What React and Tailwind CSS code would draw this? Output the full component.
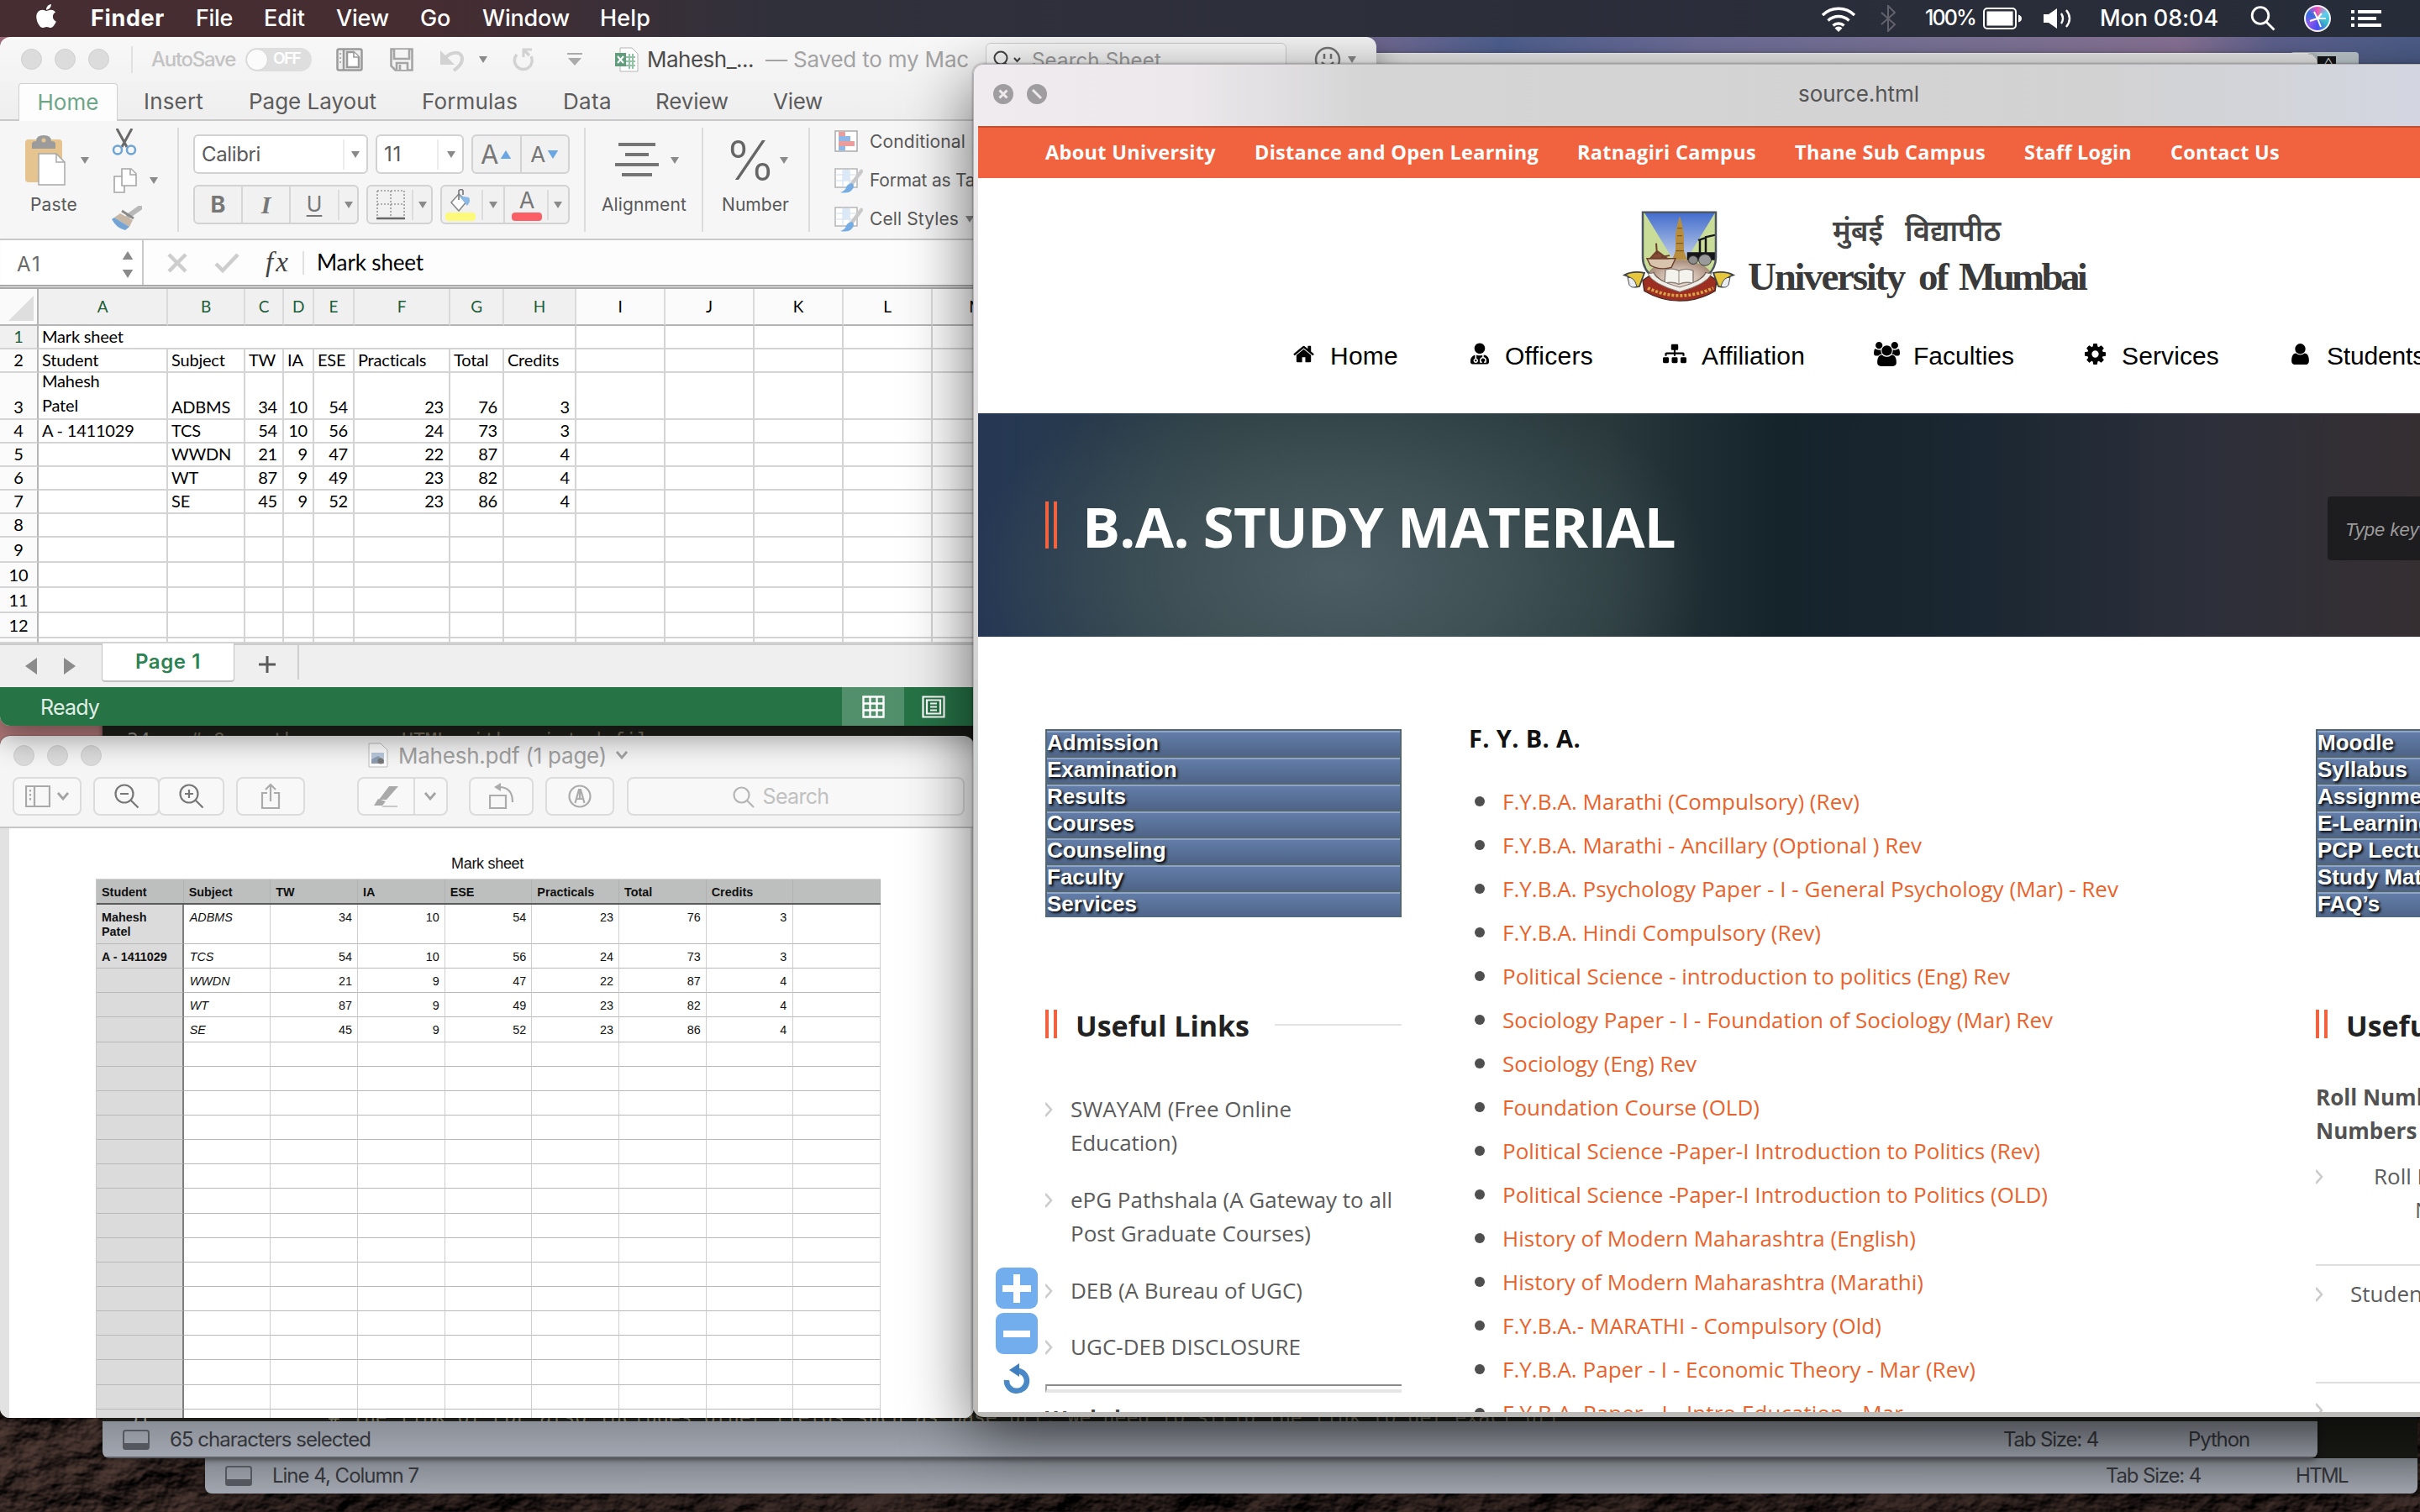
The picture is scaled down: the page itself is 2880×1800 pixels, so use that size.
import React, { useLayoutEffect, useRef, useState } from "react";
import { FaApple, FaUserMd, FaSitemap } from "react-icons/fa";

/* Text run whose tracking is computed so that it fills a given width. */
function T({ w, className = "", children }) {
  const ref = useRef(null);
  const [ls, setLs] = useState(0);
  useLayoutEffect(() => {
    const el = ref.current;
    const prev = el.style.letterSpacing;
    el.style.letterSpacing = "0px";
    const natural = el.getBoundingClientRect().width;
    el.style.letterSpacing = prev;
    setLs((w - natural) / el.textContent.length);
  }, [w]);
  return (
    <span ref={ref} className={"inline-block shrink-0 whitespace-pre " + className} style={{ letterSpacing: ls + "px" }}>
      {children}
    </span>
  );
}

const Caret = ({ className = "", up }) => (
  <svg viewBox="0 0 10 8" className={"h-2 w-2.5 shrink-0 " + className} fill="#8a8a8a">
    <path d={up ? "M0 8h10L5 0z" : "M0 0h10L5 8z"} />
  </svg>
);

/* ------------------------------- Menu bar ------------------------------- */
function MenuBar() {
  return (
    <header className="absolute inset-x-0 top-0 z-50 flex h-11 items-center bg-gradient-to-r from-[#452d32] from-[18%] via-[#30303b] via-[32%] to-[#262c38] text-[27px] font-medium text-white">
      <FaApple className="-mt-1.5 ml-[41px] size-[32px] w-[28px]" />
      <T w={88} className="ml-[39px] font-bold">Finder</T>
      <T w={44} className="ml-[37px]">File</T>
      <T w={49} className="ml-[37px]">Edit</T>
      <T w={63} className="ml-[37px]">View</T>
      <T w={36} className="ml-[37px]">Go</T>
      <T w={104} className="ml-[38px]">Window</T>
      <T w={60} className="ml-[36px]">Help</T>
      <div className="ml-auto flex items-center pr-[46px]">
        <svg viewBox="0 0 42 32" className="h-8 w-[42px]" fill="none" stroke="#fff" strokeWidth="3.4">
          <path d="M2 12a27 27 0 0 1 38 0M8.500 18.500a18 18 0 0 1 25 0M14.500 24.500a9.500 9.500 0 0 1 13 0" />
          <path d="M16.500 27.500l4.500 4.500 4.500-4.500a6 6 0 0 0-9 0z" fill="#fff" stroke="none" />
        </svg>
        <svg viewBox="0 0 20 32" className="ml-[28px] h-8 w-5" fill="none" stroke="#62626d" strokeWidth="2">
          <path d="M2 9l16 14-8 8V1l8 8L2 23" />
        </svg>
        <T w={60} className="ml-[34px] text-[25px]">100%</T>
        <svg viewBox="0 0 46 26" className="ml-[9px] h-[26px] w-[46px]" fill="none" stroke="#fff" strokeWidth="2">
          <rect x="1" y="1" width="38" height="24" rx="4" />
          <rect x="4.500" y="4.500" width="31" height="17" fill="#fff" stroke="none" />
          <path d="M42 8.500q4 1 4 4.500t-4 4.500z" fill="#fff" stroke="none" />
        </svg>
        <svg viewBox="0 0 34 26" className="ml-[26px] h-[26px] w-[34px]" fill="none" stroke="#fff" strokeWidth="2.400">
          <path d="M0 8h6l10-7v24l-10-7H0z" fill="#fff" stroke="none" />
          <path d="M21 7q4 6 0 12M27 3q8 10 0 20" />
        </svg>
        <T w={141} className="ml-[33px]">Mon 08:04</T>
        <svg viewBox="0 0 30 30" className="ml-[38px] size-[30px]" fill="none" stroke="#fff" strokeWidth="2.800">
          <circle cx="12" cy="11.500" r="9.800" />
          <path d="M19 19l9.500 9.500" />
        </svg>
        <span className="ml-[34px] flex size-8 items-center justify-center rounded-full border-2 border-white/90 bg-[conic-gradient(#ff4fa0,#5bd0f0,#39b7c9,#4c4cf0,#8f59e8,#2d6fe0,#f04fc0)]">
          <svg viewBox="0 0 24 24" className="size-6" stroke="#fff" strokeWidth="2">
            <path d="M12 12L8 4M12 12l10 0M12 12l4 10M12 12l-9 3M12 12l5-6" />
          </svg>
        </span>
        <svg viewBox="0 0 36 20" className="ml-[24px] h-5 w-9" fill="#fff">
          <path d="M0 0h4v4H0zM8 0h28v4H8zM0 8h4v4H0zM8 8h22v4H8zM0 16h4v4H0zM8 16h28v4H8z" />
        </svg>
      </div>
    </header>
  );
}

/* ------------------------------ Wallpaper ------------------------------- */
function Wallpaper() {
  return (
    <div className="absolute inset-0 bg-[#1d1513]">
      <div className="h-[70px] bg-[linear-gradient(90deg,#a26d7c_0%,#7c7099_56%,#4f6191_62%,#6f6f9a_70%,#7c7599_80%,#8a7497_90%,#5f6390_94%,#4d5f8b_100%)]" />
      <div className="h-20 bg-gradient-to-r from-[#7d7194] from-[85%] to-[#4b5c88]" />
      <div className="h-[1450px] bg-gradient-to-b from-[#7b5a75] via-[#b77c7c] to-[#3a2a28]" />
      <svg className="block h-[200px] w-full" preserveAspectRatio="none">
        <filter id="rock" x="0" y="0" width="100%" height="100%" colorInterpolationFilters="sRGB">
          <feTurbulence type="fractalNoise" baseFrequency="0.012 0.016" numOctaves="5" seed="8" />
          <feDiffuseLighting lightingColor="#57403a" surfaceScale="16" diffuseConstant="0.95">
            <feDistantLight azimuth="235" elevation="36" />
          </feDiffuseLighting>
        </filter>
        <rect width="100%" height="100%" filter="url(#rock)" />
      </svg>
      <div className="absolute top-[62px] left-[2726px] flex h-8 w-[81px] rounded bg-[#c3ced2] pt-[5px] pl-8">
        <span className="flex h-6 w-[22px] items-start justify-center bg-[#15171a] pl-1 text-[11px] leading-[12px] text-white">△</span>
      </div>
    </div>
  );
}

/* ---------------------------- Editor windows ---------------------------- */
const PanelIcon = () => (
  <svg viewBox="0 0 32 24" className="h-6 w-8 shrink-0">
    <rect x="1" y="1" width="30" height="22" rx="2.500" fill="none" stroke="#54575d" strokeWidth="2" />
    <path d="M1 16h30v5q0 2-2 2H3q-2 0-2-2z" fill="#54575d" />
  </svg>
);

function Editors() {
  return (
    <>
      <section className="absolute top-[200px] left-[244px] flex h-[1578px] w-[2633px] flex-col justify-end overflow-hidden rounded-b-lg bg-[#1b1c17] shadow-[0_10px_40px_rgba(0,0,0,0.4)]">
        <footer className="flex h-[42px] items-center bg-gradient-to-b from-[#83888f] to-[#a1a6b0] pl-6 text-[24px] text-[#33353a]">
          <PanelIcon />
          <T w={174} className="ml-6">Line 4, Column 7</T>
          <T w={113} className="ml-auto">Tab Size: 4</T>
          <T w={62} className="mr-[83px] ml-[113px]">HTML</T>
        </footer>
      </section>
      <section className="absolute top-[63px] left-[122px] flex h-[1673px] w-[2636px] flex-col overflow-hidden rounded-t-xl rounded-b-lg border-t border-[#f8f8f8] bg-[#20211c] font-['DejaVu_Sans_Mono',monospace] text-[23.2px] text-[#75715e] shadow-[0_2px_6px_rgba(0,0,0,0.5)]">
        <div className="h-[60px] bg-[#ececec]" />
        <div className="mt-[744px] flex h-[26px] leading-[26px]">
          <span className="w-[104px] pl-[29px] text-[#8f908a]">34</span>
          <T w={560}># Open the source HTML with printed file</T>
        </div>
        <div className="mt-[782px] flex h-[16px] overflow-hidden leading-[22px]">
          <span className="w-[269px] pl-[29px] text-[#8f908a]">51</span>
          <T w={1466}># The link of PDF also includes other fields such as base url. We need to strip the link to get exact url</T>
        </div>
        <footer className="mt-auto flex h-11 shrink-0 items-center border-b-2 border-[#5d6067] bg-gradient-to-b from-[#8a8f97] to-[#a1a6b0] pt-0.5 pl-6 font-[Inter,sans-serif] text-[24px] text-[#33353a]">
          <PanelIcon />
          <T w={239} className="ml-6">65 characters selected</T>
          <T w={113} className="ml-auto">Tab Size: 4</T>
          <T w={73} className="mr-[81px] ml-[107px]">Python</T>
        </footer>
      </section>
    </>
  );
}

/* ------------------------------ Spreadsheet ----------------------------- */
const Light = () => <i className="size-[25px] rounded-full border border-[#cfcfcf] bg-[#dcdcdc]" />;

function ExcelTitle() {
  return (
    <div className="flex h-[53px] shrink-0 items-center text-[26px] text-[#c3c3c3]">
      <div className="ml-[25px] flex gap-[15px]"><Light /><Light /><Light /></div>
      <i className="ml-[26px] h-8 w-0.5 bg-[#e0e0e0]" />
      <T w={100} className="ml-[22px] text-[24px] font-medium">AutoSave</T>
      <span className="ml-[12px] flex h-7 w-[79px] items-center rounded-full bg-[#dedede] text-[19px] font-semibold text-white">
        <i className="mr-1.5 ml-px size-[26px] rounded-full border border-[#d4d4d4] bg-[#fbfbfb]" />
        <T w={32}>OFF</T>
      </span>
      <svg viewBox="0 0 32 28" className="ml-[29px] h-7 w-8 shrink-0" fill="#fff" stroke="#9a9a9a" strokeWidth="2.500">
        <rect x="1.500" y="1.500" width="29" height="25" rx="2" fill="#eee" />
        <path d="M9 2v24" /><path d="M13 5h8l6 6v12H13z" /><path d="M21 5v6h6" strokeWidth="1.600" />
        <path d="M5 6v14" strokeDasharray="2 3" strokeWidth="1.500" />
      </svg>
      <svg viewBox="0 0 28 28" className="ml-[32px] size-7 shrink-0" fill="#f4f4f4" stroke="#a5a5a5" strokeWidth="2.600">
        <path d="M1.500 1.500h25v25h-20l-5-5z" /><path d="M5 2v11h18V2M8 26v-8h13v8M12 20v6" />
      </svg>
      <svg viewBox="0 0 34 30" className="ml-[30px] h-[30px] w-[34px] shrink-0" fill="none" stroke="#d2d2d2" strokeWidth="4">
        <path d="M7 14C14 5 28 4 28 14c0 7-6 11-10 14" /><path d="M2 4v17h17z" fill="#d2d2d2" stroke="none" />
      </svg>
      <Caret className="ml-[14px]" />
      <svg viewBox="0 0 28 30" className="ml-[29px] h-[30px] w-7 shrink-0" fill="none" stroke="#d2d2d2" strokeWidth="3.500">
        <path d="M6 9a10.500 10.500 0 1 0 17 2" /><path d="M14 12V3h10" strokeWidth="3" /><path d="M15 4l6 6" />
      </svg>
      <svg viewBox="0 0 18 15" className="ml-[38px] h-[15px] w-[18px] shrink-0" fill="#aaa"><path d="M0 0h18v2H0zM1 6h16l-8 9z" /></svg>
      <svg viewBox="0 0 28 30" className="ml-[39px] h-[30px] w-7 shrink-0">
        <path d="M6 1h14l7 7v21H6z" fill="#fff" stroke="#b5b5b5" />
        <path d="M12 12h12M12 17h12M12 22h12M17 8v18M21 8v18" stroke="#8fc3a3" strokeWidth="2" />
        <path d="M0 7h13v16H0z" fill="#5f9d7b" /><path d="M3 11l7 8M10 11l-7 8" stroke="#fff" strokeWidth="2" />
      </svg>
      <T w={127} className="ml-[10px] text-[#4b4b4b]">Mahesh_...</T>
      <T w={242} className="ml-[14px] text-[#a3a3a3]">— Saved to my Mac</T>
      <span className="mt-[14px] ml-[20px] flex h-[54px] w-[358px] items-center rounded-md border border-[#cfcfcf] bg-[#fcfcfc] pb-[12px] text-[24px] text-[#a0a0a0]">
        <svg viewBox="0 0 34 24" className="ml-2 h-6 w-[34px]" fill="none" stroke="#444" strokeWidth="2"><circle cx="9" cy="9" r="7.500" /><path d="M14 15l6 7M25 9l3.500 4L32 9" /></svg>
        <T w={154} className="ml-3">Search Sheet</T>
      </span>
      <svg viewBox="0 0 32 32" className="ml-[33px] size-8 shrink-0" fill="none" stroke="#777" strokeWidth="2.500"><circle cx="16" cy="16" r="14" /><path d="M12 9v6M20 9v6M9 19q7 8 14 0" /></svg>
      <Caret className="ml-2" />
    </div>
  );
}

function ExcelTabs() {
  return (
    <nav className="flex h-[47px] shrink-0 items-end border-b-2 border-[#c9c9c9] text-[26px] text-[#5c5c5c]">
      <span className="-mb-0.5 ml-[22px] flex h-[45px] w-[118px] items-center justify-center rounded-t border border-b-0 border-[#cfcfcf] bg-[#fdfdfd] pb-0.5 text-[#6fa587]"><T w={73}>Home</T></span>
      <div className="flex h-11 items-center">
        <T w={71} className="ml-[31px]">Insert</T>
        <T w={152} className="ml-[54px]">Page Layout</T>
        <T w={114} className="ml-[54px]">Formulas</T>
        <T w={58} className="ml-[54px]">Data</T>
        <T w={87} className="ml-[52px]">Review</T>
        <T w={59} className="ml-[53px]">View</T>
      </div>
    </nav>
  );
}

const Rule = ({ className = "" }) => <i className={"h-[124px] w-0.5 shrink-0 bg-[#dcdcdc] " + className} />;
const boxed = "flex h-[47px] items-center rounded-md border-2 border-[#d2d2d2] ";

function BrushCell() {
  return (
    <svg viewBox="0 0 34 32" className="h-8 w-[34px] shrink-0" fill="none">
      <path d="M1 2h26v22H1z" fill="#fff" stroke="#b5b5b5" strokeWidth="1.500" /><path d="M1 9h26M1 16h26M10 2v22M18 2v22" stroke="#cfdcea" />
      <path d="M10 3h8v13h-8z" fill="#dbe8f6" />
      <path d="M32 5L20 21" stroke="#c9c9c9" strokeWidth="4.500" strokeLinecap="round" />
      <path d="M21 19q4 3 0 8t-14 3q6-2 7-6t7-5z" fill="#76ace4" />
    </svg>
  );
}

function ExcelRibbon() {
  return (
    <div className="flex h-[142px] shrink-0 items-center border-b-2 border-[#c9c9c9] bg-[#f6f6f6] text-[21px] text-[#595959]">
      <div className="-mt-2 ml-[30px] flex w-[76px] flex-col">
        <div className="flex h-[62px] items-center">
          <svg viewBox="0 0 48 60" className="h-[60px] w-12 shrink-0">
            <rect x="0" y="5" width="44" height="51" rx="4" fill="#e6c48f" />
            <path d="M8 16V10q0-3 5-3 0-7 9-7t9 7q5 0 5 3v6z" fill="#9b9b9b" /><circle cx="22" cy="6" r="2.500" fill="#e6c48f" />
            <path d="M16 22h21l10 10v27H16z" fill="#fff" stroke="#a8a8a8" strokeWidth="1.500" /><path d="M37 22v10h10" fill="none" stroke="#a8a8a8" strokeWidth="1.500" />
          </svg>
          <Caret className="ml-[18px]" />
        </div>
        <T w={56} className="mt-1.5 ml-1.5 self-start">Paste</T>
      </div>
      <div className="ml-[27px] flex w-[56px] flex-col gap-[15px]">
        <svg viewBox="0 0 30 32" className="h-8 w-[30px]" fill="none"><path d="M6 0l12 22M24 0L12 22" stroke="#6a6a6a" strokeWidth="3" /><circle cx="7" cy="25.500" r="5" stroke="#6da4d6" strokeWidth="2.500" /><circle cx="23" cy="25.500" r="5" stroke="#6da4d6" strokeWidth="2.500" /></svg>
        <div className="flex items-center">
          <svg viewBox="0 0 28 30" className="ml-0.5 h-[30px] w-7 shrink-0" fill="#fff" stroke="#a5a5a5" strokeWidth="1.600"><path d="M1 10h12v19H1z" /><path d="M10 1h11l6 6v14H10z" /><path d="M20 1v7h7" /></svg>
          <Caret className="ml-[15px]" />
        </div>
        <svg viewBox="0 0 36 30" className="h-[30px] w-9"><path d="M34 2L20 12" stroke="#b9b9b9" strokeWidth="6" strokeLinecap="round" /><path d="M10 9l15 8-4 8L3 14z" fill="#c9b7a6" /><path d="M3 14l18 11-5 4Q6 27 0 16z" fill="#73a4d4" /><path d="M12 6l14 9" stroke="#8a8a8a" strokeWidth="3" /></svg>
      </div>
      <Rule className="ml-[22px]" />
      <div className="-mt-px ml-[17px] flex flex-col gap-[13px] text-[24px]">
        <div className="flex gap-[9px]">
          <span className={boxed + "w-[208px] bg-white pr-2 pl-2"}><T w={70}>Calibri</T><i className="ml-auto h-9 w-0.5 bg-[#ececec]" /><Caret className="ml-2" /></span>
          <span className={boxed + "w-[105px] bg-white px-2"}><T w={21}>11</T><i className="ml-auto h-9 w-0.5 bg-[#ececec]" /><Caret className="ml-2.5" /></span>
          <span className={boxed + "w-[117px] bg-[#f1f1f1] text-[#777]"}>
            <span className="flex flex-1 items-center justify-center gap-0.5 border-r-2 border-[#d2d2d2] text-[31px] leading-[43px]">A<Caret up className="h-2.5 w-3.5 [fill:#6aa6e2]" /></span>
            <span className="flex flex-1 items-center justify-center gap-0.5 text-[26px] leading-[43px]">A<Caret className="h-2.5 w-3.5 [fill:#6aa6e2]" /></span>
          </span>
        </div>
        <div className="flex gap-[9px] text-[#777]">
          <span className={boxed + "w-[197px] bg-[#f1f1f1] text-center text-[27px]"}>
            <b className="w-[57px] border-r-2 border-[#d6d6d6] leading-[43px]">B</b>
            <i className="w-[57px] border-r-2 border-[#d6d6d6] font-['Liberation_Serif',serif] text-[30px] leading-[43px] font-bold">I</i>
            <span className="w-[56px] text-[25px] underline decoration-2 underline-offset-4">U</span>
            <i className="h-9 w-0.5 bg-[#dcdcdc]" /><Caret className="ml-[6px]" />
          </span>
          <span className={boxed + "w-[79px] bg-[#f1f1f1]"}>
            <svg viewBox="0 0 34 36" className="ml-[10px] h-9 w-[34px]" fill="none" stroke="#999" strokeWidth="1.600"><path d="M1 1h32v30M1 1v30M17 1v30M1 17h32" strokeDasharray="2 2" /><path d="M0 34h34" stroke="#666" strokeWidth="2.500" /></svg>
            <i className="ml-2 h-9 w-0.5 bg-[#dcdcdc]" /><Caret className="ml-[6px]" />
          </span>
          <span className={boxed + "w-[154px] bg-[#f1f1f1]"}>
            <span className="ml-[4px] flex w-9 flex-col items-center">
              <svg viewBox="0 0 28 28" className="h-[28px] w-7" fill="none"><path d="M12 6l10 8-10 12L3 16z" fill="#fff" stroke="#8a8a8a" strokeWidth="1.600" /><path d="M12 8l10 12q5-6 2-10z" fill="#8bb8e4" /><path d="M12 13V2q3-3 5 0v5" stroke="#777" strokeWidth="1.600" /></svg>
              <i className="h-2.5 w-9 rounded-sm bg-[#fdf97a]" />
            </span>
            <i className="ml-[7px] h-9 w-0.5 bg-[#dcdcdc]" /><Caret className="ml-[7px]" />
            <i className="ml-[7px] h-[43px] w-0.5 bg-[#d6d6d6]" />
            <span className="ml-[8px] flex w-9 flex-col items-center text-[27px] leading-[28px]">A<i className="h-2.5 w-9 rounded-sm bg-[#fb6067]" /></span>
            <i className="ml-[6px] h-9 w-0.5 bg-[#dcdcdc]" /><Caret className="ml-[6px]" />
          </span>
        </div>
      </div>
      <Rule className="ml-[17px]" />
      <div className="-mt-2 ml-[19px] flex w-[101px] flex-col">
        <div className="flex h-[62px] items-center"><svg viewBox="0 0 52 42" className="ml-4 h-[42px] w-[52px]" fill="#757575"><path d="M4 0h44v4H4zM12 12h28v4H12zM0 24h52v4H0zM8 36h36v4H8z" /></svg><Caret className="ml-[14px]" /></div>
        <T w={101} className="mt-1.5 self-start">Alignment</T>
      </div>
      <Rule className="ml-[18px]" />
      <div className="-mt-2 ml-[22px] flex w-[80px] flex-col">
        <div className="flex h-[62px] items-center text-[64px] leading-[56px] font-light text-[#666]"><T w={51} className="ml-1">%</T><Caret className="ml-[14px]" /></div>
        <T w={80} className="mt-1.5 self-start">Number</T>
      </div>
      <Rule className="ml-[23px]" />
      <div className="mt-0.5 ml-[29px] flex flex-col gap-[14px]">
        <div className="flex h-8 items-center whitespace-nowrap">
          <svg viewBox="0 0 34 28" className="h-7 w-[34px]"><path d="M1 1h26v24H1z" fill="#fff" stroke="#aaa" strokeWidth="1.500" /><path d="M5 2h8v5H5zM5 13h19v6H5z" fill="#eb9d9c" /><path d="M5 7h14v6H5zM5 19h8v5H5z" fill="#8db8e8" /></svg>
          <T w={114} className="ml-[8px]">Conditional</T>
          <T w={106} className="ml-[8px]">Formatting</T>
        </div>
        <div className="flex h-8 items-center whitespace-nowrap"><BrushCell /><T w={155} className="ml-[8px]">Format as Table</T></div>
        <div className="flex h-8 items-center whitespace-nowrap"><BrushCell /><T w={106} className="ml-[8px]">Cell Styles</T><Caret className="ml-2" /></div>
      </div>
    </div>
  );
}

const GRID_COLS = "grid grid-cols-[46px_154px_92px_46px_36px_48px_114px_64px_86px_106px_106px_106px_106px_106px]";
const HEAD = ["A", "B", "C", "D", "E", "F", "G", "H", "I", "J", "K", "L", "M"];
const SHEET = [
  { h: "h-7", cells: ["Student", "Subject", "TW", "IA", "ESE", "Practicals", "Total", "Credits"] },
  { h: "h-14", cells: ["Mahesh\nPatel", "ADBMS", 34, 10, 54, 23, 76, 3] },
  { h: "h-7", cells: ["A - 1411029", "TCS", 54, 10, 56, 24, 73, 3] },
  { h: "h-7", cells: ["", "WWDN", 21, 9, 47, 22, 87, 4] },
  { h: "h-7", cells: ["", "WT", 87, 9, 49, 23, 82, 4] },
  { h: "h-7", cells: ["", "SE", 45, 9, 52, 23, 86, 4] },
  { h: "h-7", cells: [] },
  { h: "h-[30px]", cells: [] },
  { h: "h-[30px]", cells: [] },
  { h: "h-[30px]", cells: [] },
  { h: "h-[30px]", cells: [] },
  { h: "h-1.5", cells: [] },
];
const cellBase = "overflow-hidden border-r-2 border-b-2 border-[#d4d4d4] ";

function Sheet() {
  return (
    <div className="h-[422px] w-[1638px] shrink-0 overflow-hidden bg-white font-[Lato,sans-serif] text-[20px] tracking-[-0.2px] text-black">
      <div className={GRID_COLS + " h-11 bg-[#f4f4f4]"}>
        <span className="flex items-end justify-end border-r-2 border-b-2 border-[#b5b5b5] bg-[#fafafa] pr-1 pb-1"><svg viewBox="0 0 30 30" className="size-[30px]" fill="#dedede"><path d="M30 0v30H0z" /></svg></span>
        {HEAD.map((c, i) => (
          <span key={c} className={"flex items-center justify-center border-r-2 border-b-2 border-r-[#dadada] border-b-[#b5b5b5] text-[19px] " + (i < 8 ? "bg-[#f0f0f0] text-[#1d5c38]" : "bg-[#fbfbfb]")}>{c}</span>
        ))}
      </div>
      <div className={GRID_COLS + " h-7 leading-[24px]"}>
        <span className="border-r-2 border-b-2 border-r-[#b5b5b5] border-b-[#d4d4d4] bg-[#f0f0f0] text-center text-[#1d5c38]">1</span>
        <span className={cellBase + "col-span-8 pl-1"}>Mark sheet</span>
        {[0, 1, 2, 3, 4].map((k) => <span key={k} className={cellBase} />)}
      </div>
      {SHEET.map((row, r) => (
        <div key={r} className={GRID_COLS + " " + row.h}>
          <span className="flex items-end justify-center overflow-hidden border-r-2 border-b-2 border-r-[#b5b5b5] border-b-[#d4d4d4] bg-[#fbfbfb] pb-px leading-[25px]">{r < 11 ? r + 2 : ""}</span>
          {HEAD.map((c, i) => {
            const v = row.cells[i];
            const num = typeof v === "number";
            return (
              <span key={c} className={cellBase + "flex items-end pb-px whitespace-pre " + (num ? "justify-end pr-1.5 " : "pl-1 ") + (v === "Mahesh\nPatel" ? "leading-[29px]" : "leading-[25px]")}>{v}</span>
            );
          })}
        </div>
      ))}
    </div>
  );
}

function Excel() {
  return (
    <section className="absolute top-11 left-0 z-20 flex h-[820px] w-[1638px] flex-col overflow-hidden rounded-xl bg-gradient-to-b from-[#f8f8f8] to-[#eeeeee] to-[12%] shadow-[0_14px_36px_rgba(0,0,0,0.4)]">
      <ExcelTitle />
      <ExcelTabs />
      <ExcelRibbon />
      <div className="flex h-[53px] shrink-0 items-center bg-[#fdfdfd]">
        <span className="ml-0.5 flex h-full w-[169px] items-center justify-between border-r-2 border-[#c9c9c9] bg-white pt-1 pr-2.5 pl-[18px] text-[24px] text-[#6a6a6a]">
          <T w={30}>A1</T>
          <span className="flex flex-col gap-3"><Caret up className="h-2.5 w-3.5" /><Caret className="h-2.5 w-3.5" /></span>
        </span>
        <svg viewBox="0 0 24 24" className="ml-[28px] size-6" stroke="#cdcdcd" strokeWidth="4.500"><path d="M2 2l20 20M22 2L2 22" /></svg>
        <svg viewBox="0 0 30 24" className="ml-[32px] h-6 w-[30px]" fill="none" stroke="#cdcdcd" strokeWidth="4.500"><path d="M2 13l8 8L28 2" /></svg>
        <T w={30} className="ml-[31px] font-['Liberation_Serif',serif] text-[33px] text-[#444] italic">fx</T>
        <i className="ml-[14px] h-7 w-0.5 bg-[#e0e0e0]" />
        <T w={127} className="ml-[15px] font-[Lato,sans-serif] text-[26px] text-black">Mark sheet</T>
      </div>
      <div className="h-[5px] shrink-0 border-y-2 border-[#a9a9a9] bg-[#e5e5e5]" />
      <Sheet />
      <div className="flex h-[52px] shrink-0 items-start border-t-2 border-[#cbcbcb] bg-[#efefef]">
        <svg viewBox="0 0 60 20" className="mt-[15px] ml-[30px] h-5 w-[60px]" fill="#8b8b8b"><path d="M14 0v20L0 10zM46 0v20l14-10z" /></svg>
        <span className="-mt-0.5 ml-[31px] flex h-[46px] w-[158px] items-center justify-center rounded-b border-x border-b-2 border-[#c2c2c2] bg-white pb-px text-[24px] font-semibold text-[#2b8253]"><T w={78}>Page 1</T></span>
        <svg viewBox="0 0 20 20" className="mt-[13px] ml-[29px] size-5" stroke="#5a5a5a" strokeWidth="3"><path d="M0 10h20M10 0v20" /></svg>
        <i className="ml-[26px] h-[41px] w-0.5 bg-[#cfcfcf]" />
      </div>
      <footer className="flex h-[46px] shrink-0 bg-[#267346] pl-[48px] text-[25px] text-[#e0eee6]">
        <T w={70} className="self-center pt-1">Ready</T>
        <span className="ml-[884px] flex h-full w-[74px] items-center justify-center bg-[#52906c]">
          <svg viewBox="0 0 27 27" className="size-[27px]" fill="none" stroke="#fff" strokeWidth="2.400"><path d="M1.500 1.500h24v24h-24zM9.500 1.500v24M17.500 1.500v24M1.500 9.500h24M1.500 17.500h24" /></svg>
        </span>
        <svg viewBox="0 0 28 27" className="ml-[21px] h-[27px] w-7 self-center" fill="none" stroke="#fff" strokeWidth="2.200"><path d="M1.500 1.500h25v24h-25zM6 5.500h16v16H6zM10 9.500h8M10 13.500h8M10 17.500h8" /></svg>
      </footer>
    </section>
  );
}

/* ------------------------------ PDF preview ----------------------------- */
const PDF_COLS = "grid grid-cols-[repeat(9,1fr)]";
const PDF_HEAD = ["Student", "Subject", "TW", "IA", "ESE", "Practicals", "Total", "Credits", ""];
const PDF_ROWS = [
  ["Mahesh\nPatel", "ADBMS", 34, 10, 54, 23, 76, 3, ""],
  ["A - 1411029", "TCS", 54, 10, 56, 24, 73, 3, ""],
  ["", "WWDN", 21, 9, 47, 22, 87, 4, ""],
  ["", "WT", 87, 9, 49, 23, 82, 4, ""],
  ["", "SE", 45, 9, 52, 23, 86, 4, ""],
  ...Array.from({ length: 16 }, () => ["", "", "", "", "", "", "", "", ""]),
];
const pbtn = "flex h-[46px] items-center justify-center rounded-lg border-2 border-[#dcdcdc] bg-[#f8f8f8] ";
const Chev = ({ className = "" }) => <svg viewBox="0 0 14 10" className={"h-2.5 w-3.5 shrink-0 " + className} fill="none" stroke="#a3a3a3" strokeWidth="2.800"><path d="M1 1l6 7 6-7" /></svg>;

function Pdf() {
  return (
    <section className="absolute top-[876px] left-0 z-10 flex h-[812px] w-[1159px] flex-col overflow-hidden rounded-xl bg-[#f5f5f5] shadow-[0_0_2px_rgba(0,0,0,0.6)]">
      <div className="flex h-[110px] shrink-0 flex-col border-b-2 border-[#c6c6c6]">
        <div className="flex h-[46px] items-center text-[26px] text-[#a0a0a0]">
          <div className="ml-4 flex gap-[15px]"><Light /><Light /><Light /></div>
          <svg viewBox="0 0 24 30" className="ml-[317px] h-[30px] w-6"><path d="M1 1h14l8 8v20H1z" fill="#fdfdfd" stroke="#bcbcbc" /><path d="M4 12h15v13H4z" fill="#b9c8dc" /><path d="M4 20l8-4 7 5v4H4z" fill="#8d9bb0" /><circle cx="15" cy="22" r="3.500" fill="#777" /></svg>
          <T w={248} className="ml-[12px]">Mahesh.pdf (1 page)</T>
          <Chev className="ml-[11px]" />
        </div>
        <div className="mt-[3px] flex pl-[15px]">
          <span className={pbtn + "w-[82px] gap-2"}>
            <svg viewBox="0 0 30 26" className="h-[26px] w-[30px]" fill="none" stroke="#a9a9a9" strokeWidth="2.200"><path d="M1 1h28v24H1zM11 1v24" /><path d="M6 5v13" strokeDasharray="2.500 2.500" /></svg><Chev />
          </span>
          <span className={pbtn + "ml-[14px] w-[79px]"}><svg viewBox="0 0 30 30" className="size-[30px]" fill="none" stroke="#777" strokeWidth="2.200"><circle cx="12" cy="12" r="10.500" /><path d="M19.500 19.500l9 9M7 12h10" /></svg></span>
          <span className={pbtn + "-ml-0.5 w-[79px]"}><svg viewBox="0 0 30 30" className="size-[30px]" fill="none" stroke="#777" strokeWidth="2.200"><circle cx="12" cy="12" r="10.500" /><path d="M19.500 19.500l9 9M7 12h10M12 7v10" /></svg></span>
          <span className={pbtn + "ml-[14px] w-[82px]"}><svg viewBox="0 0 24 32" className="h-8 w-6" fill="none" stroke="#ababab" strokeWidth="2.200"><path d="M8 12H2v18h20V12h-6M12 22V2M6 8l6-6 6 6" /></svg></span>
          <span className={pbtn + "ml-[62px] w-[108px] justify-start"}>
            <svg viewBox="0 0 32 28" className="ml-4 h-7 w-8" fill="#a9a9a9"><path d="M20 2h11L17 18h-9zM7 17l9 3-4 5H2z" /><path d="M13 25h17v2H11z" fill="#c9c9c9" /></svg>
            <i className="ml-[17px] h-full w-0.5 bg-[#dcdcdc]" /><Chev className="ml-[11px]" />
          </span>
          <span className={pbtn + "ml-[25px] w-[77px]"}><svg viewBox="0 0 30 32" className="h-8 w-[30px]" fill="none" stroke="#ababab" strokeWidth="2.200"><path d="M1 15h19v15H1zM12 5q16 0 16 18" /><path d="M6 5l8-5v10z" fill="#ababab" stroke="none" /></svg></span>
          <span className={pbtn + "ml-[14px] w-[82px]"}><svg viewBox="0 0 28 28" className="size-7" fill="none" stroke="#ababab" strokeWidth="2.200"><circle cx="14" cy="14" r="12.500" /><path d="M8.500 22L13 6h2l4.500 16M10 17h8M14 6v10" /></svg></span>
          <span className={pbtn + "ml-[15px] h-[45px] w-[402px] pt-0.5 pr-9 text-[25px] text-[#c1c1c1]"}>
            <svg viewBox="0 0 26 26" className="size-[26px]" fill="none" stroke="#b5b5b5" strokeWidth="2.200"><circle cx="10.500" cy="10.500" r="9" /><path d="M17 17l8 8" /></svg>
            <T w={79} className="ml-2.5">Search</T>
          </span>
        </div>
      </div>
      <div className="flex flex-1 bg-[#e2e2e2] pr-1 pl-[11px]">
        <div className="w-full bg-white font-['Liberation_Sans',sans-serif] text-[14.4px] text-[#111]">
          <div className="mt-[31px] flex h-[22px] items-center pl-[526px] text-[18px]"><T w={86}>Mark sheet</T></div>
          <div className="mt-[7px] ml-[103px] w-[934px] border-l border-[#c9c9c9]">
            <div className={PDF_COLS + " h-[31px] border-t border-b-2 border-t-[#d5d5d5] border-b-[#5a5a5a] bg-[#bdbfbe] font-bold"}>
              {PDF_HEAD.map((h, i) => <span key={i} className="flex items-center border-r border-[#b0b2b1] pt-1 pl-[6px]">{h}</span>)}
            </div>
            {PDF_ROWS.map((row, r) => (
              <div key={r} className={PDF_COLS + (r === 0 ? " h-[47px]" : " h-[29.15px]")}>
                {row.map((v, i) => (
                  <span key={i} className={"border-b-[1.5px] border-b-[#b9b9b9] pt-[7px] leading-[17px] whitespace-pre " + (i === 0 ? "border-r-2 border-r-[#7d7d7d] bg-[#dbdbdb] pl-[6px] font-bold" : i === 1 ? "border-r border-r-[#cfcfcf] pl-[7px] italic" : i === 7 ? "border-r border-r-[#cfcfcf] pr-[7px] text-right" : "border-r border-r-[#cfcfcf] pr-1.5 text-right")}>{v}</span>
                ))}
              </div>
            ))}
          </div>
        </div>
      </div>
    </section>
  );
}

/* ------------------------------- Web page ------------------------------- */
const HomeIcon = () => <svg viewBox="0 0 1792 1792" className="-mt-1 ml-[3px] size-[27px] shrink-0"><path d="M1408 992v480q0 26-19 45t-45 19h-384v-384h-256v384h-384q-26 0-45-19t-19-45v-480q0-1 .5-3t.5-3l575-474 575 474q1 2 1 6zm223-69l-62 74q-8 9-21 11h-3q-13 0-21-7l-692-577-692 577q-12 8-24 7-13-2-21-11l-62-74q-8-10-7-23.500t11-21.500l719-599q32-26 76-26t76 26l244 204v-195q0-14 9-23t23-9h192q14 0 23 9t9 23v408l219 182q10 8 11 21.500t-7 23.500z" /></svg>;
const CogIcon = () => <svg viewBox="0 0 1792 1792" className="-mt-1 size-[29px] shrink-0"><path d="M1152 896q0-106-75-181t-181-75-181 75-75 181 75 181 181 75 181-75 75-181zm512-109v222q0 12-8 23t-20 13l-185 28q-19 54-39 91 35 50 107 138 10 12 10 25t-9 23q-27 37-99 108t-94 71q-12 0-26-9l-138-108q-44 23-91 38-16 136-29 186-7 28-36 28h-222q-14 0-24.500-8.500t-11.500-21.500l-28-184q-49-16-90-37l-141 107q-10 9-25 9-14 0-25-11-126-114-165-168-7-10-7-23 0-12 8-23 15-21 51-66.500t54-70.500q-27-50-41-99l-183-27q-13-2-21-12.500t-8-23.500v-222q0-12 8-23t19-13l186-28q14-46 39-92-40-57-107-138-10-12-10-24 0-10 9-23 26-36 98.500-107.500t94.500-71.500q13 0 26 10l138 107q44-23 91-38 16-136 29-186 7-28 36-28h222q14 0 24.500 8.500t11.500 21.500l28 184q49 16 90 37l142-107q9-9 24-9 13 0 25 10 129 119 165 170 7 8 7 22 0 12-8 23-15 21-51 66.500t-54 70.500q26 50 41 98l183 28q13 2 21 12.500t8 23.500z" /></svg>;
const UserIcon = () => <svg viewBox="0 0 1792 1792" className="-mt-1 size-[29px] shrink-0"><path d="M1536 1399q0 109-62.500 187t-150.500 78h-854q-88 0-150.500-78t-62.500-187q0-85 8.500-160.500t31.500-152 58.500-131 94-89 134.500-34.500q131 128 313 128t313-128q76 0 134.500 34.500t94 89 58.500 131 31.500 152 8.500 160.500zm-256-887q0 159-112.500 271.500t-271.500 112.500-271.500-112.500-112.500-271.500 112.500-271.500 271.500-112.500 271.500 112.500 112.500 271.500z" /></svg>;
const UsersIcon = () => <svg viewBox="0 0 1920 1792" className="-mt-1 h-[29px] w-[31px] shrink-0"><path d="M593 896q-162 5-265 128h-134q-82 0-138-40.500t-56-118.500q0-353 124-353 6 0 43.500 21t97.500 42.500 119 21.500q67 0 133-23-5 37-5 66 0 139 81 256zm1071 637q0 120-73 189.500t-194 69.500h-874q-121 0-194-69.500t-73-189.500q0-53 3.500-103.500t14-109 26.500-108.500 43-97.500 62-81 85.500-53.500 111.500-20q10 0 43 21.500t73 48 107 48 135 21.500 135-21.500 107-48 73-48 43-21.500q61 0 111.500 20t85.500 53.500 62 81 43 97.500 26.500 108.500 14 109 3.500 103.500zm-1024-1277q0 106-75 181t-181 75-181-75-75-181 75-181 181-75 181 75 75 181zm704 384q0 159-112.500 271.500t-271.500 112.500-271.500-112.500-112.500-271.500 112.500-271.500 271.500-112.500 271.500 112.500 112.500 271.500zm576 225q0 78-56 118.500t-138 40.500h-134q-103-123-265-128 81-117 81-256 0-29-5-66 66 23 133 23 59 0 119-21.500t97.500-42.500 43.500-21q124 0 124 353zm-128-609q0 106-75 181t-181 75-181-75-75-181 75-181 181-75 181 75 75 181z" /></svg>;

function Crest() {
  return (
    <svg viewBox="0 0 134 122" preserveAspectRatio="none" className="h-[110px] w-[134px] shrink-0">
      <defs>
        <linearGradient id="sky" x1="0" y1="0" x2="0" y2="1"><stop offset="0" stopColor="#3c67cc" /><stop offset="1" stopColor="#dfe8ee" /></linearGradient>
        <radialGradient id="earth"><stop offset="0.3" stopColor="#e8d6cb" /><stop offset="1" stopColor="#a58a78" /></radialGradient>
        <clipPath id="shield"><path d="M24 3h87v60c0 24-22 34-43 44C46 97 24 87 24 63z" /></clipPath>
      </defs>
      <g clipPath="url(#shield)">
        <path d="M20 0h95v110H20z" fill="#c9dd98" />
        <path d="M24 0h88L68 80z" fill="url(#sky)" />
        <path d="M68 8l3 12 2 12v22l4 12H59l4-12V32l2-12z" fill="#b98d3e" /><path d="M65 24h6M65 34h6M64 44h8M63 54h10" stroke="#7e5c20" strokeWidth="1.500" />
        <ellipse cx="68" cy="92" rx="40" ry="26" fill="url(#earth)" />
        <path d="M29 64h34l-5 12q-14 4-25-3z" fill="#d8c4ad" stroke="#6e3f2b" strokeWidth="1.500" /><path d="M40 44l1 15M41 54l12 10H33zM46 62l10-2" fill="#8a4b36" stroke="#6e3f2b" strokeWidth="2" />
        <path d="M78 57h32v8H78zM92 40v16M99 36v20M90 40l8-3M98 36l12-3" fill="#16161a" stroke="#16161a" strokeWidth="2.500" />
        <circle cx="84" cy="66" r="5.500" fill="#8c8c8c" stroke="#333" /><circle cx="98" cy="66" r="7.500" fill="#9a9a9a" stroke="#333" />
      </g>
      <path d="M24 3h87v60c0 24-22 34-43 44C46 97 24 87 24 63z" fill="none" stroke="#4c545c" strokeWidth="2.500" />
      <path d="M51 79q9-3 16 1 9-4 17 0v17q-9-3-17 1-8-4-17-1z" fill="#f4f2ec" stroke="#8b8178" strokeWidth="1.500" /><path d="M67 80v18" stroke="#8b8178" />
      <path d="M24 93l13-10q2 8 31 22 29-14 31-22l13 10-2 14q-20 13-42 13t-42-13z" fill="#9c2f22" stroke="#4a2a20" strokeWidth="1.500" />
      <path d="M30 84l7-1q2 10 31 19 29-9 31-19l7 1q-6 14-38 24Q36 98 30 84z" fill="#f0ece6" stroke="#77706a" />
      <path d="M30 103q38 20 78 0" fill="none" stroke="#dba547" strokeWidth="4" strokeDasharray="3 2" />
      <path d="M2 86q10-6 24-3l-6 18q-8 3-8-5-2-8-10-10zM132 86q-10-6-24-3l6 18q8 3 8-5 2-8 10-10z" fill="#e6c63c" stroke="#3e4046" strokeWidth="1.800" />
      <path d="M6 89q8-1 11 12-6 3-9-2zM128 89q-8-1-11 12 6 3 9-2z" fill="#e9edf2" stroke="#3e4046" />
    </svg>
  );
}

const NavItem = ({ icon, gap, w, ml, label }) => (
  <a className={"flex shrink-0 items-center " + ml}>{icon}<T w={w} className={gap}>{label}</T></a>
);

function MenuBox({ items }) {
  return (
    <ul className="h-[224px] overflow-hidden border-2 border-b-0 border-[#54666f] font-['Liberation_Sans',sans-serif] text-[26px] font-bold text-white">
      {items.map((t) => (
        <li key={t} className="h-8 border-t-2 border-b-2 border-t-[#8fa5c8] border-b-[#54666f] bg-gradient-to-b from-[#627da8] to-[#4f6587] leading-[24px] whitespace-nowrap [text-shadow:2px_2px_3px_#000]">{t}</li>
      ))}
    </ul>
  );
}

const Bars = ({ className }) => <span className={"flex w-3.5 shrink-0 gap-1.5 " + className}><i className="w-1 bg-[#f1633f]" /><i className="w-1 bg-[#f1633f]" /></span>;
const Heading = () => (
  <h3 className="mt-[110px] flex h-[34px] items-center text-[34px] font-bold text-[#222]">
    <Bars className="h-[34px]" />
    <T w={207} className="mt-[5px] ml-[22px]">Useful Links</T>
    <i className="mt-0.5 ml-[30px] h-0.5 flex-1 bg-[#e3e3e3]" />
  </h3>
);
const Angle = () => <svg viewBox="0 0 9 20" className="mt-[11px] h-5 w-[9px] shrink-0" fill="none" stroke="#cbcbcb" strokeWidth="2.600"><path d="M0 2l7 8-7 8" /></svg>;

const LINKS = [
  [[263, "SWAYAM (Free Online"], [127, "Education)"]],
  [[383, "ePG Pathshala (A Gateway to all"], [286, "Post Graduate Courses)"]],
  [[276, "DEB (A Bureau of UGC)"]],
  [[274, "UGC-DEB DISCLOSURE"]],
];
const MATERIAL = [
  [425, "F.Y.B.A. Marathi (Compulsory) (Rev)"],
  [499, "F.Y.B.A. Marathi - Ancillary (Optional ) Rev"],
  [733, "F.Y.B.A. Psychology Paper - I - General Psychology (Mar) - Rev"],
  [379, "F.Y.B.A. Hindi Compulsory (Rev)"],
  [604, "Political Science - introduction to politics (Eng) Rev"],
  [655, "Sociology Paper - I - Foundation of Sociology (Mar) Rev"],
  [231, "Sociology (Eng) Rev"],
  [306, "Foundation Course (OLD)"],
  [640, "Political Science -Paper-I Introduction to Politics (Rev)"],
  [649, "Political Science -Paper-I Introduction to Politics (OLD)"],
  [492, "History of Modern Maharashtra (English)"],
  [501, "History of Modern Maharashtra (Marathi)"],
  [451, "F.Y.B.A.- MARATHI - Compulsory (Old)"],
  [563, "F.Y.B.A. Paper - I - Economic Theory - Mar (Rev)"],
  [477, "F.Y.B.A. Paper - I - Intro Education - Mar"],
];

function ZoomTools() {
  return (
    <div className="absolute top-[1359px] left-[21px] flex w-[50px] flex-col items-center gap-[5px]">
      <span className="flex h-[49px] w-[50px] items-center justify-center rounded-[9px] bg-[#72adee]"><svg viewBox="0 0 34 34" className="size-[34px]" stroke="#fff" strokeWidth="8"><path d="M0 17h34M17 0v34" /></svg></span>
      <span className="flex h-[49px] w-[50px] items-center justify-center rounded-[9px] bg-[#72adee]"><i className="h-2 w-8 bg-white" /></span>
      <svg viewBox="0 0 32 38" className="mt-1.5 h-[38px] w-8"><path d="M4 20a12 12 0 1 0 14-11" fill="none" stroke="#4a88c6" strokeWidth="6.500" /><path d="M7 8l12-8v16z" fill="#3f7fbf" /></svg>
    </div>
  );
}

function Browser() {
  return (
    <section className="absolute top-[76px] left-[1158px] z-30 flex h-[1611px] w-[1800px] flex-col rounded-xl border border-[#b4b2b3] bg-gradient-to-b from-[#efebee] via-[#cfd0d0] via-[50%] to-[#bdbbb7] pl-[5px] shadow-[0_22px_80px_rgba(0,0,0,0.6),0_0_3px_rgba(0,0,0,0.5)]">
      <div className="-ml-[5px] flex h-[73px] shrink-0 items-center rounded-t-xl bg-[linear-gradient(90deg,#f0ebef_0%,#ece8eb_14%,#d5d5d6_26%,#d2d2d3_75%,#d3d6e0_95%)] pb-[4px] text-[26px] text-[#555]">
        <svg viewBox="0 0 66 26" className="ml-[22px] h-[26px] w-[66px]" stroke="#eeeaec" strokeWidth="3"><circle cx="13" cy="13" r="12" fill="#9f9d9f" stroke="none" /><circle cx="53" cy="13" r="12" fill="#9f9d9f" stroke="none" /><path d="M8.500 8.500l9 9M17.500 8.500l-9 9M48 8l10 10" /></svg>
        <T w={144} className="ml-[893px]">source.html</T>
      </div>
      <div className="relative h-[1531px] w-[1800px] overflow-hidden bg-white font-['Open_Sans',sans-serif]">
        <nav className="flex h-[62px] items-center border-t-2 border-[#c14f31] bg-[#f1633f] pb-px pl-20 text-[23.5px] font-bold text-white">
          <T w={203}>About University</T>
          <T w={338} className="ml-[46px]">Distance and Open Learning</T>
          <T w={213} className="ml-[46px]">Ratnagiri Campus</T>
          <T w={227} className="ml-[46px]">Thane Sub Campus</T>
          <T w={128} className="ml-[46px]">Staff Login</T>
          <T w={130} className="ml-[46px]">Contact Us</T>
        </nav>
        <div className="flex h-[280px] flex-col">
          <div className="mt-[38px] ml-[767px] flex h-[122px]">
            <Crest />
            <div className="ml-[15px] flex flex-col text-[#444]">
              <span className="ml-[101px] flex h-[52px] gap-[26px] pt-0.5 font-['Noto_Sans_Devanagari','Noto_Sans',sans-serif] text-[34.5px] leading-[54px] font-semibold whitespace-nowrap"><span>मुंबई</span><span>विद्यापीठ</span></span>
              <span className="mt-[4px] flex font-['Liberation_Serif',serif] text-[47px] leading-[46px] font-bold text-[#3a3a3a]">
                <T w={186}>University</T>
                <T w={34} className="ml-[17px]">of</T>
                <T w={150} className="ml-[14px]">Mumbai</T>
              </span>
            </div>
          </div>
          <div className="mt-[34px] flex h-[34px] items-center pl-[372px] font-['Liberation_Sans',sans-serif] text-[30px] text-black">
            <NavItem icon={<HomeIcon />} w={81} gap="ml-[17px]" ml="" label="Home" />
            <NavItem icon={<FaUserMd className="-mt-1 h-[26px] w-[22px]" />} w={105} gap="ml-[19px]" ml="ml-[86px]" label="Officers" />
            <NavItem icon={<FaSitemap className="-mt-1 size-[28px]" />} w={123} gap="ml-[18px]" ml="ml-[83px]" label="Affiliation" />
            <NavItem icon={<UsersIcon />} w={120} gap="ml-[16px]" ml="ml-[82px]" label="Faculties" />
            <NavItem icon={<CogIcon />} w={116} gap="ml-[17px]" ml="ml-[82px]" label="Services" />
            <NavItem icon={<UserIcon />} w={117} gap="ml-[17px]" ml="ml-[82px]" label="Students" />
          </div>
        </div>
        <div className="flex h-[266px] items-center bg-[radial-gradient(ellipse_440px_260px_at_430px_190px,#4c5e64,rgba(70,88,92,0.75)_45%,transparent),linear-gradient(90deg,#253754_0px,#263950_70px,#2a3b40_300px,#28383b_750px,#15232b_950px,#1b2732_1200px,#2c2f3a_1450px,#362f32_1720px)] pl-20">
          <Bars className="h-14" />
          <T w={706} className="mt-px ml-[30px] text-[67px] leading-[80px] font-bold text-white">B.A. STUDY MATERIAL</T>
          <span className="mt-2 ml-[776px] flex h-[76px] w-[300px] items-center rounded bg-[#1d1c1f] pt-0.5 pl-[21px] font-['Liberation_Sans',sans-serif] text-[22px] text-[#9b9b9b] italic">Type keyword</span>
        </div>
        <div className="mt-[110px] flex pl-20">
          <aside className="w-[424px] shrink-0">
            <MenuBox items={["Admission", "Examination", "Results", "Courses", "Counseling", "Faculty", "Services"]} />
            <Heading />
            <ul className="mt-[64px] flex flex-col gap-[27px] text-[26px] leading-[40.400px] text-[#5b5b5b]">
              {LINKS.map((lines) => (
                <li key={lines[0][1]} className="flex">
                  <Angle />
                  <span className="ml-[21px] flex flex-col items-start">{lines.map(([w, t]) => <T key={t} w={w}>{t}</T>)}</span>
                </li>
              ))}
            </ul>
            <div className="mt-[25px] h-2.5 border-t-2 border-b-4 border-l-2 border-t-[#8b8b8b] border-b-[#e6e6e6] border-l-[#a0a0a0]" />
            <b className="mt-[13px] block text-[26px] leading-[36px] text-[#444]">Workshop</b>
          </aside>
          <main className="ml-[82px] w-[1006px] shrink-0">
            <T w={133} className="-ml-0.5 h-6 text-[29px] leading-[22px] font-bold text-[#111]">F. Y. B. A.</T>
            <ul className="mt-[32px] text-[26px] leading-[52px] text-[#e8632b]">
              {MATERIAL.map(([w, t]) => (
                <li key={t} className="flex h-[52px] items-center"><i className="mr-[21px] ml-[5px] size-3 rounded-full bg-[#4f4f4f]" /><T w={w}>{t}</T></li>
              ))}
            </ul>
          </main>
          <aside className="w-[424px] shrink-0">
            <MenuBox items={["Moodle", "Syllabus", "Assignments", "E-Learning", "PCP Lectures", "Study Material", "FAQ’s"]} />
            <Heading />
            <p className="mt-[50px] text-[26px] leading-[40.400px] font-bold text-[#525252]">Roll Numbers<br />Numbers</p>
            <div className="mt-[13px] flex h-[127px] border-b-2 border-[#dedede] text-[26px] leading-[40.400px] whitespace-nowrap text-[#5b5b5b]"><Angle /><span className="ml-[60px]">Roll Numbers<br /><span className="pl-[49px]">Numbers</span></span></div>
            <div className="flex h-[140px] border-b-2 border-[#dedede] pt-[13px] text-[26px] leading-[40.400px] text-[#5b5b5b]"><Angle /><span className="ml-[32px]">Students</span></div>
            <div className="flex pt-[11px]"><Angle /></div>
          </aside>
        </div>
        <ZoomTools />
      </div>
    </section>
  );
}

export default function App() {
  return (
    <div className="relative h-[1800px] w-[2880px] overflow-hidden font-[Inter,sans-serif]">
      <Wallpaper />
      <Editors />
      <Pdf />
      <Excel />
      <Browser />
      <MenuBar />
    </div>
  );
}
